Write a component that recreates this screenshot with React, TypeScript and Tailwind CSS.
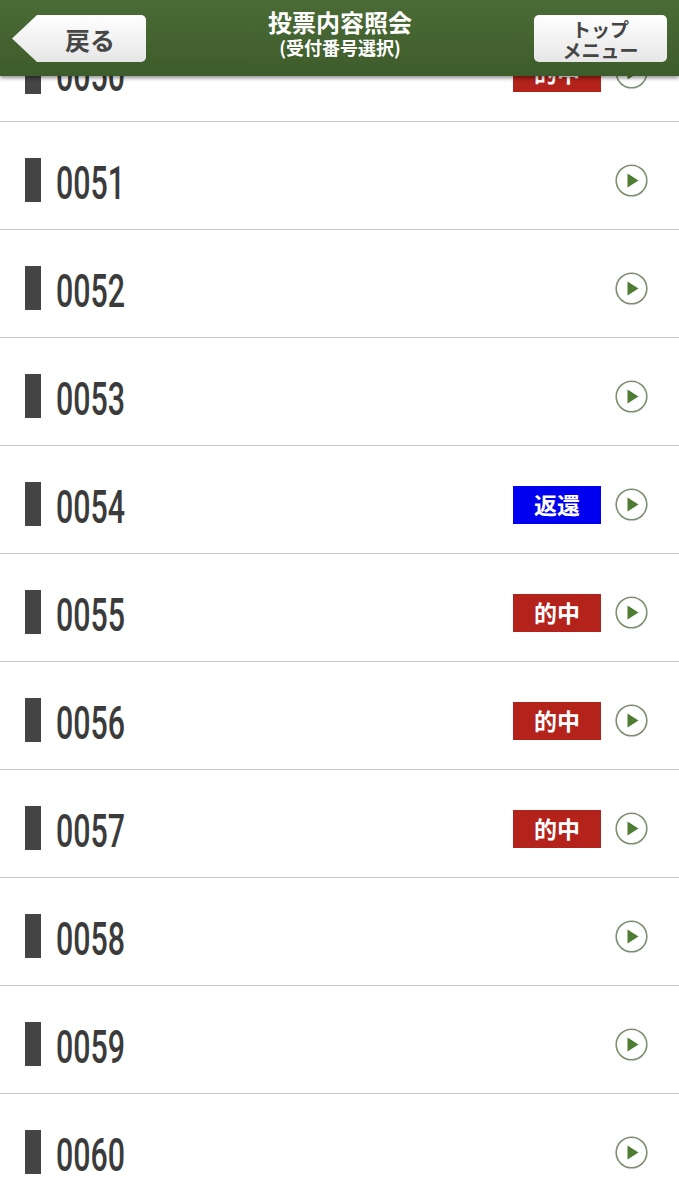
import React from "react";

type Row = { no: string; badge?: "hit" | "refund" };

const rows: Row[] = [
  { no: "0050", badge: "hit" },
  { no: "0051" },
  { no: "0052" },
  { no: "0053" },
  { no: "0054", badge: "refund" },
  { no: "0055", badge: "hit" },
  { no: "0056", badge: "hit" },
  { no: "0057", badge: "hit" },
  { no: "0058" },
  { no: "0059" },
  { no: "0060" },
];

const jp = { fontFamily: '"Noto Sans CJK JP", "Noto Sans", sans-serif' };

function PlayIcon() {
  return (
    <svg width="33" height="33" viewBox="0 0 33 33">
      <circle cx="16.5" cy="16.5" r="15.3" fill="white" stroke="#7d8f6e" strokeWidth="1.6" />
      <path d="M12.5 9.5 L23.5 16.5 L12.5 23.5 Z" fill="#4e7c32" />
    </svg>
  );
}

export default function App() {
  return (
    <div className="relative w-[679px] h-[1200px] overflow-hidden bg-white" style={jp}>
      <div className="absolute top-0 left-0 right-0 h-[76px] z-10 bg-gradient-to-b from-[#4b6b36] to-[#3d5c2b] shadow-[0_2px_4px_rgba(0,0,0,0.45)] flex items-start justify-between px-[12px] pt-[15px]">
        <div className="w-[134px] h-[47px] bg-gradient-to-b from-white to-[#e6e6e6] rounded-r-[5px] [clip-path:polygon(0_50%,25px_0,100%_0,100%_100%,25px_100%)] flex items-center justify-center pl-[22px]">
          <span className="text-[25px] font-bold text-[#474747] leading-[30px]">戻る</span>
        </div>
        <div className="flex flex-col items-center text-white font-bold -mt-[7px]">
          <span className="text-[24px] leading-[28px]">投票内容照会</span>
          <span className="text-[18px] leading-[22px]">(受付番号選択)</span>
        </div>
        <div className="w-[133px] h-[47px] bg-gradient-to-b from-white to-[#e6e6e6] rounded-[5px] flex flex-col items-center justify-center">
          <span className="text-[19px] font-bold text-[#454545] leading-[21px]">トップ</span>
          <span className="text-[19px] font-bold text-[#454545] leading-[21px]">メニュー</span>
        </div>
      </div>

      <div className="mt-[76px] h-[1124px] overflow-hidden">
        <div className="-mt-[62px]">
          {rows.map((r) => (
            <div key={r.no} className="h-[108px] border-b border-[#c9c9c9] flex items-center pl-[25px] pr-[31px] pt-[6px]">
              <div className="w-[16px] h-[44px] bg-[#444444] mt-[3px]" />
              <div className="ml-[15px] w-[120px] mt-[8px]">
                <span
                  className="inline-block text-[46px] font-medium text-[#3b3b3b] leading-none scale-x-[0.66] origin-left"
                  style={{ fontFamily: "Roboto, sans-serif" }}
                >
                  {r.no}
                </span>
              </div>
              <div className="flex-1" />
              {r.badge === "hit" && (
                <div className="w-[88px] h-[38px] bg-[#b3221b] text-white font-bold text-[23px] leading-none flex items-center justify-center mr-[14px] mt-[4px]">
                  的中
                </div>
              )}
              {r.badge === "refund" && (
                <div className="w-[88px] h-[38px] bg-[#0000f0] text-white font-bold text-[23px] leading-none flex items-center justify-center mr-[14px] mt-[4px]">
                  返還
                </div>
              )}
              <div className="mt-[4px]">
                <PlayIcon />
              </div>
            </div>
          ))}
        </div>
      </div>
    </div>
  );
}
